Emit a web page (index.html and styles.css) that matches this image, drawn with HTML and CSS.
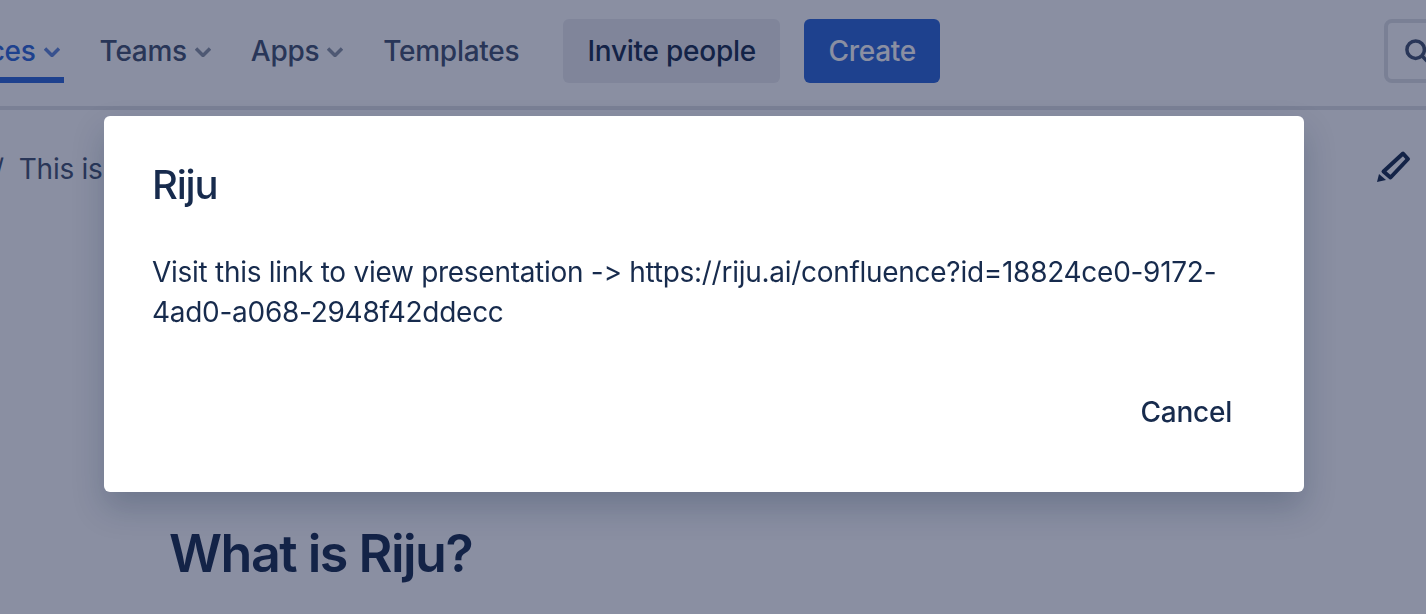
FILE: index.html
```html
<!DOCTYPE html>
<html lang="en">
<head>
    <meta charset="UTF-8">
    <meta name="viewport" content="width=device-width, initial-scale=1.0">
    <title>Riju</title>
    <link rel="stylesheet" href="styles.css">
</head>
<body>
    <header class="topbar">
        <nav class="nav">
            <a class="nav-item active">Spaces
                <svg class="chevron" viewBox="0 0 16 10"><path d="M1 1.500l7 7 7-7" /></svg>
            </a>
            <a class="nav-item">Teams
                <svg class="chevron" viewBox="0 0 16 10"><path d="M1 1.500l7 7 7-7" /></svg>
            </a>
            <a class="nav-item">Apps
                <svg class="chevron" viewBox="0 0 16 10"><path d="M1 1.500l7 7 7-7" /></svg>
            </a>
            <a class="nav-item">Templates</a>
        </nav>
        <button class="btn btn-invite">Invite people</button>
        <button class="btn btn-create">Create</button>
        <div class="search">
            <svg class="search-icon" viewBox="0 0 24 24"><circle cx="10" cy="10" r="7.500" /><path d="M15.500 15.500L22 22" /></svg>
        </div>
    </header>

    <div class="page-bar">
        <span class="crumb">/</span>
        <span class="crumb-text">This is</span>
        <svg class="edit-icon" viewBox="0 0 34 34">
            <path class="pencil-body" d="M6.500 21.500L26 3.500L31 9L13.500 27.500z" />
            <path class="pencil-tip" d="M0 32L2 24L9 30z" />
        </svg>
    </div>

    <main class="content">
        <h1>What is Riju?</h1>
    </main>

    <div class="overlay">
        <div class="modal">
            <h2>Riju</h2>
            <p>Visit this link to view presentation -&gt; https://riju.ai/confluence?id=18824ce0-9172-4ad0-a068-2948f42ddecc</p>
            <div class="modal-footer">
                <button class="btn-cancel">Cancel</button>
            </div>
        </div>
    </div>
</body>
</html>
```

FILE: styles.css
```css
html, body {
    height: 100%;
}
body {
    margin: 0;
    overflow: hidden;
    font-family: Inter, "Liberation Sans", sans-serif;
    font-variant-ligatures: none;
    font-feature-settings: "calt" 0;
    letter-spacing: -0.28px;
    background-color: #fff;
    color: #172b4d;
}
.topbar {
    display: flex;
    align-items: flex-start;
    box-sizing: border-box;
    height: 110px;
    padding-top: 19px;
    border-bottom: 4px solid #dfe1e6;
    margin-left: -66px;
    width: 1600px;
}
.nav {
    display: flex;
    flex: none;
    gap: 32px;
    margin-right: 40px;
}
.nav-item {
    display: flex;
    align-items: center;
    gap: 8px;
    height: 64px;
    padding: 0 4px;
    font-size: 28px;
    font-weight: 500;
    color: #42526e;
}
.nav-item.active {
    color: #2b66d8;
    box-shadow: inset 0 -6px 0 #2b66d8;
}
.chevron {
    width: 16px;
    height: 10px;
    margin-top: 2px;
    fill: none;
    stroke: #8993a4;
    stroke-width: 3.500;
}
.active .chevron {
    stroke: #5f86d8;
}
.btn {
    flex: none;
    height: 64px;
    border: none;
    border-radius: 6px;
    font-family: inherit;
    font-size: 28px;
    font-weight: 500;
    letter-spacing: -0.25px;
}
.btn-invite {
    width: 217px;
    background-color: #ebecf0;
    color: #172b4d;
}
.btn-create {
    width: 136px;
    margin-left: 24px;
    background-color: #2b66d8;
    color: #fff;
}
.search {
    display: flex;
    flex: none;
    align-items: center;
    box-sizing: border-box;
    width: 200px;
    height: 64px;
    margin-left: 444px;
    padding-left: 16px;
    border: 4px solid #dfe1e6;
    border-radius: 8px;
}
.search-icon {
    width: 28px;
    height: 28px;
    margin-top: 2px;
    fill: none;
    stroke: #42526e;
    stroke-width: 3;
}
.page-bar {
    display: flex;
    align-items: center;
    height: 118px;
    font-size: 28px;
    color: #42526e;
}
.crumb {
    margin-left: -6px;
    margin-right: 15px;
}
.edit-icon {
    width: 34px;
    height: 34px;
    margin-left: auto;
    margin-right: 15px;
    margin-bottom: 4px;
}
.pencil-body {
    fill: none;
    stroke: #172b4d;
    stroke-width: 4;
    stroke-linejoin: round;
}
.pencil-tip {
    fill: #172b4d;
}
.content {
    padding-top: 294px;
    padding-left: 169px;
}
h1 {
    margin: 0;
    font-size: 52px;
    font-weight: 600;
    letter-spacing: -1.500px;
    line-height: 64px;
    color: #172b4d;
}
.overlay {
    position: fixed;
    inset: 0;
    display: flex;
    justify-content: center;
    align-items: flex-start;
    padding: 116px 18px 0 0;
    background-color: rgba(17, 26, 66, 0.49);
}
.modal {
    box-sizing: border-box;
    width: 1200px;
    height: 376px;
    padding: 48px;
    background-color: #fff;
    border-radius: 6px;
    box-shadow: 0 16px 32px rgba(9, 30, 66, 0.22);
}
.modal h2 {
    margin: 0;
    font-size: 40px;
    font-weight: 500;
    letter-spacing: -1.200px;
    line-height: 42px;
}
.modal p {
    margin: 46px 0 0;
    font-size: 28px;
    line-height: 40px;
}
.modal-footer {
    display: flex;
    justify-content: flex-end;
    margin-top: 48px;
}
.btn-cancel {
    padding: 0 24px;
    height: 64px;
    border: none;
    background: none;
    font-family: inherit;
    font-size: 28px;
    font-weight: 500;
    letter-spacing: -0.25px;
    color: #172b4d;
}
```
